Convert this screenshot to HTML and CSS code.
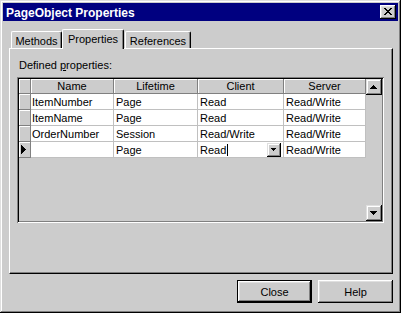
FILE: index.html
```html
<!DOCTYPE html>
<html lang="en">
<head>
    <meta charset="UTF-8">
    <title>PageObject Properties</title>
    <link rel="stylesheet" href="styles.css">
</head>
<body>

<div class="window">
    <div class="titlebar">
        <span class="title">PageObject Properties</span>
        <button class="caption-btn">
            <svg width="8" height="7" viewBox="0 0 8 7" shape-rendering="crispEdges"><path d="M0 0h2v1H0zM6 0h2v1H6zM1 1h2v1H1zM5 1h2v1H5zM2 2h4v1H2zM3 3h2v1H3zM2 4h4v1H2zM1 5h2v1H1zM5 5h2v1H5zM0 6h2v1H0zM6 6h2v1H6z"/></svg>
        </button>
    </div>

    <div class="client">
        <div class="tabs">
            <div class="tab tab-methods">Methods</div>
            <div class="tab tab-props active">Properties</div>
            <div class="tab tab-refs">References</div>
        </div>

        <div class="panel">
            <div class="label">Defined <u>p</u>roperties:</div>

            <div class="grid">
                <div class="grid-body">
                    <table>
                        <colgroup>
                            <col style="width:12px">
                            <col style="width:83px">
                            <col style="width:84px">
                            <col style="width:86px">
                            <col style="width:82px">
                        </colgroup>
                        <tr>
                            <th class="corner"></th>
                            <th>Name</th>
                            <th>Lifetime</th>
                            <th>Client</th>
                            <th>Server</th>
                        </tr>
                        <tr>
                            <td class="rowhead"></td>
                            <td>ItemNumber</td>
                            <td>Page</td>
                            <td>Read</td>
                            <td>Read/Write</td>
                        </tr>
                        <tr>
                            <td class="rowhead"></td>
                            <td>ItemName</td>
                            <td>Page</td>
                            <td>Read</td>
                            <td>Read/Write</td>
                        </tr>
                        <tr>
                            <td class="rowhead"></td>
                            <td>OrderNumber</td>
                            <td>Session</td>
                            <td>Read/Write</td>
                            <td>Read/Write</td>
                        </tr>
                        <tr>
                            <td class="rowhead current">
                                <svg width="5" height="9" viewBox="0 0 5 9" shape-rendering="crispEdges"><path d="M0 0h1v9H0zM1 1h1v7H1zM2 2h1v5H2zM3 3h1v3H3zM4 4h1v1H4z"/></svg>
                            </td>
                            <td></td>
                            <td>Page</td>
                            <td class="edit">
                                <div class="combo">
                                    <span class="combo-text">Read</span><span class="caret"></span>
                                    <span class="drop">
                                        <svg width="5" height="3" viewBox="0 0 5 3" shape-rendering="crispEdges"><path d="M0 0h5v1H0zM1 1h3v1H1zM2 2h1v1H2z"/></svg>
                                    </span>
                                </div>
                            </td>
                            <td>Read/Write</td>
                        </tr>
                    </table>
                </div>
                <div class="vscroll">
                    <div class="arrow-btn">
                        <svg width="7" height="4" viewBox="0 0 7 4" shape-rendering="crispEdges"><path d="M3 0h1v1H3zM2 1h3v1H2zM1 2h5v1H1zM0 3h7v1H0z"/></svg>
                    </div>
                    <div class="arrow-btn">
                        <svg width="7" height="4" viewBox="0 0 7 4" shape-rendering="crispEdges"><path d="M0 0h7v1H0zM1 1h5v1H1zM2 2h3v1H2zM3 3h1v1H3z"/></svg>
                    </div>
                </div>
            </div>
        </div>

        <div class="actions">
            <button class="btn default">Close</button>
            <button class="btn">Help</button>
        </div>
    </div>
</div>

</body>
</html>
```

FILE: styles.css
```css
:root {
    --face: #cccccc;
    --light: #dfdfdf;
    --shadow: #808080;
    --dark: #000000;
    --caption: #000080;
    --gridline: #c0c0c0;
}

body {
    margin: 0;
    font-family: "Liberation Sans", Arial, sans-serif;
    font-size: 11px;
    color: #000;
    background-color: var(--face);
}

.window {
    width: 401px;
    height: 313px;
    box-sizing: border-box;
    padding: 3px;
    background-color: var(--face);
    box-shadow: inset -1px -1px var(--dark), inset 1px 1px var(--light),
                inset -2px -2px var(--shadow), inset 2px 2px #fff;
}

/* title bar */
.titlebar {
    height: 18px;
    background-color: var(--caption);
    color: #fff;
    display: flex;
    align-items: center;
    justify-content: space-between;
    padding: 0 2px 0 3px;
}

.title {
    font-weight: bold;
    font-size: 12px;
    line-height: 16px;
    padding-top: 2px;
}

.caption-btn {
    width: 16px;
    height: 14px;
    padding: 0 1px 1px 0;
    border: none;
    background-color: var(--face);
    display: flex;
    align-items: center;
    justify-content: center;
    box-shadow: inset -1px -1px var(--dark), inset 1px 1px #fff,
                inset -2px -2px var(--shadow), inset 2px 2px var(--light);
}

/* tabs */
.client {
    padding: 8px 5px 0 6px;
}

.tabs {
    display: flex;
    align-items: flex-start;
    height: 19px;
    padding-left: 2px;
}

.tab {
    box-sizing: border-box;
    height: 17px;
    margin-top: 2px;
    padding-top: 3px;
    line-height: 13px;
    text-align: center;
    background-color: var(--face);
    border-top: 1px solid #fff;
    border-left: 1px solid #fff;
    border-right: 1px solid var(--dark);
    border-radius: 2px 2px 0 0;
    box-shadow: inset -1px 0 var(--shadow);
}

.tab-methods { width: 51px; }
.tab-props { width: 62px; }
.tab-refs { width: 66px; margin-left: 1px; }

.tab.active {
    height: 20px;
    margin-top: 0;
    position: relative;
    z-index: 1;
}

.panel {
    box-sizing: border-box;
    height: 226px;
    border-top: 1px solid #fff;
    border-left: 1px solid #fff;
    border-right: 1px solid var(--dark);
    border-bottom: 1px solid var(--dark);
    box-shadow: inset -1px -1px var(--shadow);
}

.label {
    margin: 10px 0 0 9px;
    line-height: 13px;
}

/* property grid */
.grid {
    width: 367px;
    height: 146px;
    box-sizing: border-box;
    margin: 5px 0 0 7px;
    padding: 2px;
    display: flex;
    box-shadow: inset 1px 1px var(--shadow), inset -1px -1px #fff,
                inset 2px 2px var(--dark), inset -2px -2px var(--shadow);
}

.grid-body {
    flex: 1;
    overflow: hidden;
    background-color: var(--face);
}

table {
    width: 347px;
    table-layout: fixed;
    border-collapse: separate;
    border-spacing: 0;
}

th {
    font-weight: normal;
    text-align: center;
    padding: 1px 2px 0;
    line-height: 13px;
    background-color: var(--face);
    border-right: 1px solid var(--shadow);
    border-bottom: 1px solid var(--shadow);
    box-shadow: inset 1px 1px #fff;
}

td {
    padding: 2px 1px 0 2px;
    line-height: 13px;
    white-space: nowrap;
    overflow: hidden;
    background-color: #fff;
    border-right: 1px solid var(--gridline);
    border-bottom: 1px solid var(--gridline);
}

td:nth-child(2) {
    padding-left: 1px;
}

td.rowhead {
    background-color: var(--face);
    border-right: 1px solid var(--shadow);
    border-bottom: 1px solid var(--shadow);
    box-shadow: inset 1px 1px #fff;
}

td.current {
    padding: 0 0 0 2px;
    vertical-align: middle;
}

td.current svg {
    display: block;
}

td.edit {
    padding: 0 1px 0 2px;
}

.combo {
    display: flex;
    align-items: flex-start;
    height: 15px;
}

.combo-text {
    padding-top: 2px;
    line-height: 13px;
}

.caret {
    width: 1px;
    height: 12px;
    margin: 2px 0 0 1px;
    background-color: #000;
}

.drop {
    margin: 1px 1px 0 auto;
    width: 14px;
    height: 14px;
    box-sizing: border-box;
    padding: 0 1px 1px 0;
    background-color: var(--face);
    display: flex;
    align-items: center;
    justify-content: center;
    box-shadow: inset -1px -1px var(--dark), inset 1px 1px var(--light),
                inset -2px -2px var(--shadow), inset 2px 2px #fff;
}

/* scrollbar */
.vscroll {
    width: 16px;
    display: flex;
    flex-direction: column;
    justify-content: space-between;
    background-color: var(--face);
}

.arrow-btn {
    width: 16px;
    height: 16px;
    box-sizing: border-box;
    padding: 0 1px 1px 0;
    display: flex;
    align-items: center;
    justify-content: center;
    background-color: var(--face);
    box-shadow: inset -1px -1px var(--dark), inset 1px 1px var(--light),
                inset -2px -2px var(--shadow), inset 2px 2px #fff;
}

/* buttons */
.actions {
    display: flex;
    justify-content: flex-end;
    gap: 6px;
    margin-top: 6px;
}

.btn {
    width: 75px;
    height: 23px;
    padding: 0;
    border: none;
    font-family: inherit;
    font-size: 11px;
    color: #000;
    background-color: var(--face);
    box-shadow: inset -1px -1px var(--dark), inset 1px 1px #fff,
                inset -2px -2px var(--shadow), inset 2px 2px var(--light);
}

.btn.default {
    box-shadow: inset 0 0 0 1px var(--dark), inset -2px -2px var(--dark),
                inset 2px 2px #fff, inset -3px -3px var(--shadow),
                inset 3px 3px var(--light);
}
```
